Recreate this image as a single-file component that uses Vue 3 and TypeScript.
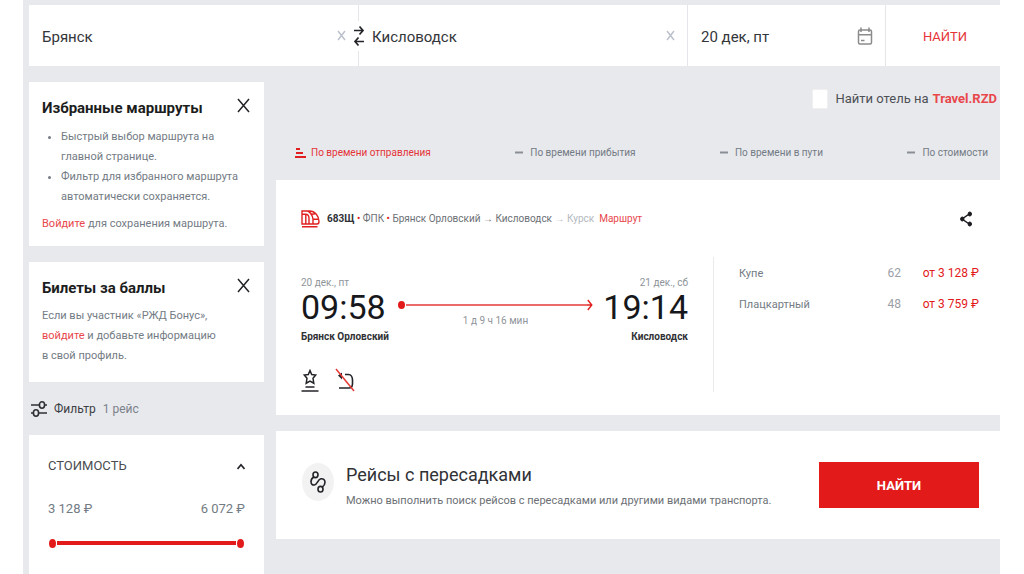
<script setup lang="ts">
import { ref } from 'vue'

interface SeatClass {
  name: string
  seats: number
  price: string
}

const from = ref('Брянск')
const to = ref('Кисловодск')
const date = ref('20 дек, пт')
const hotel = ref(false)
const activeSort = ref(0)
const minPrice = ref(3128)
const maxPrice = ref(6072)

const sorts: string[] = ['По времени отправления', 'По времени прибытия', 'По времени в пути', 'По стоимости']
const seats: SeatClass[] = [
  { name: 'Купе', seats: 62, price: 'от 3 128 ₽' },
  { name: 'Плацкартный', seats: 48, price: 'от 3 759 ₽' },
]

function money(value: number): string {
  return `${String(value).replace(/(\d)(\d{3})$/, '$1 $2')} ₽`
}

function swap(): void {
  const previous = from.value
  from.value = to.value
  to.value = previous
}
</script>

<template>
  <div class="page">
    <form class="search" @submit.prevent>
      <div class="cell">
        <input v-model="from" type="text" aria-label="Откуда" />
        <button type="button" class="plain" aria-label="Очистить пункт отправления" @click="from = ''">
          <svg width="9" height="11" viewBox="0 0 9 11"><path d="M1 1l7 9M8 1L1 10" stroke="#bcc2cb" stroke-width="1.5" fill="none" /></svg>
        </button>
        <button type="button" class="plain swap" aria-label="Поменять местами" @click="swap">
          <svg width="12" height="22" viewBox="0 0 12 22" fill="none" stroke="#222428" stroke-width="1.7">
            <path d="M1 5.500h9M6.500 1.500l3.500 4-3.500 4M11 16.500H2M5.500 12.500l-3.500 4 3.500 4" />
          </svg>
        </button>
      </div>
      <div class="cell">
        <input v-model="to" type="text" aria-label="Куда" />
        <button type="button" class="plain" aria-label="Очистить пункт назначения" @click="to = ''">
          <svg width="9" height="11" viewBox="0 0 9 11"><path d="M1 1l7 9M8 1L1 10" stroke="#bcc2cb" stroke-width="1.5" fill="none" /></svg>
        </button>
      </div>
      <div class="cell">
        <input v-model="date" type="text" aria-label="Дата" />
        <button type="button" class="plain" aria-label="Календарь">
          <svg width="16" height="18" viewBox="0 0 16 18" fill="none" stroke="#8b8b8b" stroke-width="1.5">
            <rect x="1.500" y="3" width="13" height="14" rx="1.500" />
            <path d="M1.500 7.800h13M4 .5V5M12 .5V5M4 13.500h3.500" />
          </svg>
        </button>
      </div>
      <button type="submit" class="search-submit">НАЙТИ</button>
    </form>

    <div class="columns">
      <aside class="side">
        <section class="panel favourites">
          <header>
            <h2>Избранные маршруты</h2>
            <button type="button" class="plain" aria-label="Закрыть">
              <svg width="13" height="15" viewBox="0 0 13 15"><path d="M1 1l11 13M12 1L1 14" stroke="#222428" stroke-width="1.500" fill="none" /></svg>
            </button>
          </header>
          <ul>
            <li>Быстрый выбор маршрута на<br />главной странице.</li>
            <li>Фильтр для избранного маршрута<br />автоматически сохраняется.</li>
          </ul>
          <p><a href="#">Войдите</a> для сохранения маршрута.</p>
        </section>

        <section class="panel bonus">
          <header>
            <h2>Билеты за баллы</h2>
            <button type="button" class="plain" aria-label="Закрыть">
              <svg width="13" height="15" viewBox="0 0 13 15"><path d="M1 1l11 13M12 1L1 14" stroke="#222428" stroke-width="1.500" fill="none" /></svg>
            </button>
          </header>
          <p>Если вы участник «РЖД Бонус»,<br /><a href="#">войдите</a> и добавьте информацию<br />в свой профиль.</p>
        </section>

        <div class="filter-title">
          <svg width="16" height="18" viewBox="0 0 16 18" fill="none" stroke="#2e3034" stroke-width="1.600">
            <path d="M0 5h8M14 5h2M0 13h2M8 13h8" />
            <ellipse cx="11" cy="5" rx="2.600" ry="3.200" />
            <ellipse cx="5" cy="13" rx="2.600" ry="3.200" />
          </svg>
          <span>Фильтр</span>
          <small>1 рейс</small>
        </div>

        <section class="panel cost">
          <button type="button" class="cost-head">
            <span>СТОИМОСТЬ</span>
            <svg width="8" height="7" viewBox="0 0 8 7"><path d="M.5 6L4 1.800 7.500 6" stroke="#222428" stroke-width="1.700" fill="none" /></svg>
          </button>
          <div class="cost-values">
            <span>{{ money(minPrice) }}</span>
            <span>{{ money(maxPrice) }}</span>
          </div>
          <div class="range">
            <input v-model.number="minPrice" type="range" min="3128" max="6072" aria-label="Минимальная стоимость" />
            <input v-model.number="maxPrice" type="range" min="3128" max="6072" aria-label="Максимальная стоимость" />
          </div>
        </section>
      </aside>

      <main>
        <div class="hotel">
          <input id="hotel" v-model="hotel" type="checkbox" />
          <label for="hotel">Найти отель на</label>
          <a href="#">Travel.RZD</a>
        </div>

        <nav class="sorts" aria-label="Сортировка">
          <button v-for="(name, i) in sorts" :key="name" type="button" :class="{ active: i === activeSort }" @click="activeSort = i">
            <svg v-if="i === activeSort" width="11" height="10" viewBox="0 0 11 10" fill="none" stroke="#e02020" stroke-width="2">
              <path d="M1 1h4M1 5h7M0 9h11" />
            </svg>
            <svg v-else width="8" height="10" viewBox="0 0 8 10" fill="none" stroke="#8a8f96" stroke-width="2"><path d="M0 4.500h8" /></svg>
            {{ name }}
          </button>
        </nav>

        <article class="panel train">
          <header class="train-head">
            <svg width="19" height="18" viewBox="0 0 19 18" fill="none" stroke="#e02020" stroke-width="1.400">
              <path d="M1 1h7.500C14 1 18 6 18 11.500c0 1.500-.8 2.500-2 2.500H1zM1 16.700h15.500M1 4.200h3.500c2 0 3.500 1.500 3.500 4V14M4.800 4.500V14M7 1.200c2.500 1.500 4.500 4 5 8V14M9.500 4.500l4.500-.8M12.500 9.200h5" />
            </svg>
            <p>
              <b>683Щ</b> <i>•</i> ФПК <i>•</i> Брянск Орловский → Кисловодск <span>→ Курск</span>
              <a href="#">Маршрут</a>
            </p>
            <button type="button" class="plain share" aria-label="Поделиться">
              <svg width="12" height="16" viewBox="0 0 12 16" fill="#1c1d20" stroke="#1c1d20">
                <path d="M10 2.500L2 8l8 5.500" fill="none" stroke-width="1.500" />
                <ellipse cx="9.800" cy="3" rx="1.700" ry="2" /><ellipse cx="2.300" cy="8" rx="1.700" ry="2" /><ellipse cx="9.800" cy="13" rx="1.700" ry="2" />
              </svg>
            </button>
          </header>
          <div class="train-body">
            <div class="trip">
              <div class="trip-line">
                <div class="stop">
                  <span class="day">20 дек., пт</span>
                  <time>09:58</time>
                  <strong>Брянск Орловский</strong>
                </div>
                <div class="way">
                  <div class="arrow">
                    <span class="dot"></span>
                    <span class="line"></span>
                    <svg width="6" height="12" viewBox="0 0 6 12"><path d="M0 6h5M.8 1l4 5-4 5" stroke="#e02020" stroke-width="1.400" fill="none" /></svg>
                  </div>
                  <span class="duration">1 д 9 ч 16 мин</span>
                </div>
                <div class="stop end">
                  <span class="day">21 дек., сб</span>
                  <time>19:14</time>
                  <strong>Кисловодск</strong>
                </div>
              </div>
              <div class="actions">
                <button type="button" class="plain" aria-label="В избранное">
                  <svg width="18" height="23" viewBox="0 0 18 23" fill="none" stroke="#222428" stroke-width="1.500">
                    <path d="M9 1.500l1.700 4 4 .5-2.700 3.300.8 4.900L9 12l-3.800 2.200.8-4.900L3.300 6l4-.5zM4.500 18h9M.5 22h17" />
                  </svg>
                </button>
                <button type="button" class="plain" aria-label="Невозвратный билет">
                  <svg width="20" height="24" viewBox="0 0 20 24" fill="none">
                    <path d="M10 6.500h3.500c2.500 0 4 2.500 4 5.500v3.500c0 3-1.200 4.500-3.500 4.500H4" stroke="#222428" stroke-width="1.600" />
                    <path d="M3 7.500l4-3v7z" fill="#222428" />
                    <path d="M1 1l18 22" stroke="#e53935" stroke-width="1.500" />
                  </svg>
                </button>
              </div>
            </div>
            <table>
              <tbody>
                <tr v-for="s in seats" :key="s.name">
                  <th scope="row">{{ s.name }}</th>
                  <td>{{ s.seats }}</td>
                  <td><a href="#">{{ s.price }}</a></td>
                </tr>
              </tbody>
            </table>
          </div>
        </article>

        <section class="panel transfer">
          <span class="badge">
            <svg width="16" height="22" viewBox="0 0 16 22" fill="none" stroke="#222428" stroke-width="1.600">
              <ellipse cx="5.500" cy="3.800" rx="2.500" ry="2.800" />
              <ellipse cx="10.500" cy="18.200" rx="2.500" ry="2.800" />
              <path d="M3.800 6C1.800 7.200 1 9 1 10.800 1 13 2.500 14.300 4.300 14c3.500-.6 3.200-5.600 6.700-6.200 2-.3 4 .8 4 3.400 0 2-1 3.600-2.700 4.800" />
            </svg>
          </span>
          <div class="transfer-text">
            <h3>Рейсы с пересадками</h3>
            <p>Можно выполнить поиск рейсов с пересадками или другими видами транспорта.</p>
          </div>
          <button type="button" class="primary">НАЙТИ</button>
        </section>
      </main>
    </div>
  </div>
</template>

<style>
html,
body {
  background: #fff;
}
</style>

<style scoped>
* {
  box-sizing: border-box;
}
.page {
  display: flex;
  flex-direction: column;
  min-height: 100vh;
  margin: 0 24px 0 23px;
  padding: 5px 0 0 6px;
  background: #e8e9ed;
  color: #737b84;
  font-family: Roboto, sans-serif;
  font-size: 11px;
  line-height: 20px;
}
h2,
h3,
p,
ul {
  margin: 0;
}
button,
input {
  font: inherit;
}
button {
  border: 0;
  cursor: pointer;
}
svg {
  display: block;
  flex: none;
}
a {
  color: #e8474c;
  text-decoration: none;
}
.plain {
  padding: 0;
  background: none;
}
.search {
  display: grid;
  grid-template-columns: minmax(0, 330fr) minmax(0, 329fr) minmax(0, 198fr) minmax(0, 114fr);
  height: 61px;
  background: #fff;
}
.cell {
  position: relative;
  display: flex;
  align-items: center;
  padding: 0 12px 0 13px;
  border-right: 1px solid #e4e6ea;
}
.cell input {
  flex: 1;
  min-width: 0;
  padding: 2px 0 0;
  border: 0;
  outline: 0;
  background: none;
  color: #34363a;
  font-size: 15px;
}
.swap {
  position: absolute;
  right: -7px;
  z-index: 1;
  padding: 4px 0;
  background: #fff;
}
.search-submit {
  padding: 2px 0 0 4px;
  background: none;
  color: #e53338;
  font-size: 13px;
}
.columns {
  display: grid;
  flex: 1;
  grid-template-columns: 235px minmax(0, 1fr);
  gap: 12px;
  padding-top: 16px;
}
.panel {
  background: #fff;
}
.side {
  display: flex;
  flex-direction: column;
}
.side header {
  display: flex;
  justify-content: space-between;
}
.favourites,
.bonus {
  padding: 16px 14px 12px 13px;
}
.bonus {
  margin-top: 16px;
  padding-bottom: 16px;
}
h2 {
  color: #1c1d20;
  font-size: 15px;
  line-height: 21px;
}
.side header .plain {
  align-self: flex-start;
}
.favourites ul {
  margin-top: 8px;
  padding-left: 19px;
}
.favourites p {
  margin-top: 7px;
}
.bonus p {
  margin-top: 7px;
}
.filter-title {
  display: flex;
  align-items: center;
  gap: 7px;
  height: 53px;
  padding-left: 2px;
  color: #3c3e43;
  font-size: 12px;
}
.filter-title small {
  color: #7a828b;
  font-size: 12px;
}
.cost {
  flex: 1;
  padding: 20px 19px;
}
.cost-head {
  display: flex;
  align-items: center;
  justify-content: space-between;
  width: 100%;
  padding: 0;
  background: none;
  color: #4a4c50;
  font-size: 13px;
  line-height: 22px;
}
.cost-values {
  display: flex;
  justify-content: space-between;
  margin-top: 21px;
  font-size: 13px;
  line-height: 22px;
}
.range {
  position: relative;
  display: flex;
  align-items: center;
  height: 10px;
  margin: 18px 1px 0;
}
.range::before {
  flex: 1;
  height: 4px;
  margin: 0 8px;
  background: #e21a1a;
  content: "";
}
.range input {
  position: absolute;
  left: 0;
  width: 100%;
  height: 10px;
  margin: 0;
  appearance: none;
  background: none;
  pointer-events: none;
}
.range input::-webkit-slider-thumb {
  width: 7px;
  height: 9px;
  appearance: none;
  border-radius: 50%;
  background: #e21a1a;
  pointer-events: auto;
}
main {
  display: flex;
  flex-direction: column;
}
.hotel {
  display: flex;
  align-items: center;
  justify-content: flex-end;
  gap: 4px;
  height: 33px;
  padding-right: 3px;
  color: #4d5055;
  font-size: 13px;
}
.hotel input {
  width: 16px;
  height: 20px;
  margin: 0 3px 0 0;
  appearance: none;
  border: 1px solid #f0f0f0;
  border-radius: 2px;
  background: #fff;
}
.hotel input:checked {
  background: #e21a1a;
}
.hotel a {
  font-weight: 700;
}
.sorts {
  display: flex;
  align-items: center;
  justify-content: space-between;
  height: 65px;
  padding: 10px 12px 0 19px;
}
.sorts button {
  display: flex;
  align-items: center;
  gap: 7px;
  padding: 0;
  background: none;
  color: #737b84;
  font-size: 10px;
}
.sorts .active {
  gap: 5px;
  color: #e53338;
}
.train {
  padding: 26px 21px 23px 25px;
}
.train-head {
  display: flex;
  align-items: center;
  gap: 7px;
  height: 25px;
  color: #6c7075;
  font-size: 10px;
}
.train-head p {
  flex: 1;
}
.train-head b {
  color: #303236;
}
.train-head i {
  color: #e21a1a;
  font-style: normal;
}
.train-head span {
  color: #b4b9c0;
}
.train-head a {
  margin-left: 5px;
}
.share {
  margin-right: 7px;
}
.train-body {
  display: grid;
  grid-template-columns: 412fr 266fr;
  margin-top: 26px;
}
.trip {
  padding: 17px 25px 0 0;
}
.trip-line {
  display: flex;
  justify-content: space-between;
}
.stop {
  display: flex;
  flex-direction: column;
  width: 87px;
  color: #8f959b;
  font-size: 10px;
  white-space: nowrap;
}
.end {
  align-items: flex-end;
}
.day {
  line-height: 18px;
}
time {
  color: #17181b;
  font-size: 34px;
  line-height: 30px;
}
.stop strong {
  margin-top: 7px;
  color: #303236;
  line-height: 16px;
}
.way {
  flex: 1;
  margin: 25px 8px 0 10px;
  color: #8f959b;
  font-size: 10px;
  text-align: center;
}
.arrow {
  display: flex;
  align-items: center;
}
.dot {
  width: 7px;
  height: 8px;
  border-radius: 50%;
  background: #e21a1a;
}
.line {
  flex: 1;
  height: 2px;
  margin-left: 1px;
  background: #eb6a6a;
}
.duration {
  display: block;
}
.actions {
  display: flex;
  align-items: center;
  gap: 16px;
  margin-top: 23px;
}
table {
  display: block;
  padding: 1px 0 0 25px;
  border-left: 1px solid #e9eaec;
  border-spacing: 0;
}
tbody {
  display: block;
}
tr {
  display: grid;
  grid-template-columns: 1fr 30px 78px;
  font-size: 12px;
  line-height: 31px;
}
th,
td {
  padding: 0;
  font-weight: 400;
  text-align: left;
}
th {
  font-size: 11px;
}
td {
  color: #9ba0a6;
  text-align: right;
}
td a {
  color: #e21a1a;
}
.transfer {
  display: flex;
  align-items: center;
  height: 108px;
  margin-top: 16px;
  padding: 0 21px 0 26px;
}
.badge {
  display: grid;
  flex: none;
  place-items: center;
  width: 32px;
  height: 38px;
  margin: 0 12px 6px 0;
  border-radius: 50%;
  background: #f2f2f2;
}
.transfer-text {
  flex: 1;
  padding-top: 4px;
}
h3 {
  color: #303236;
  font-size: 18px;
  font-weight: 400;
  line-height: 26px;
}
.transfer-text p {
  margin-top: 2px;
  color: #6c7075;
  line-height: 22px;
}
.primary {
  width: 160px;
  height: 46px;
  padding: 2px 0 0;
  background: #e21a1a;
  color: #fff;
  font-size: 13px;
  font-weight: 700;
}
</style>
